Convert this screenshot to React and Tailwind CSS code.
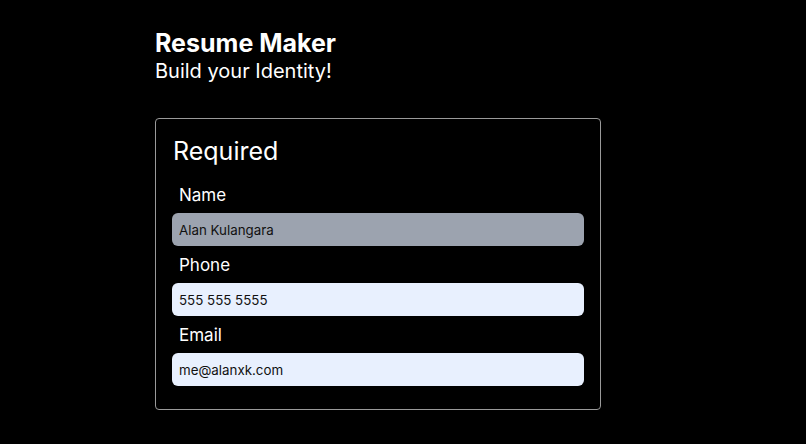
const fields = [
    { label: "Name", value: "Alan Kulangara", bg: "bg-[#9ca3af]" },
    { label: "Phone", value: "555 555 5555", bg: "bg-[#e8f0fe]" },
    { label: "Email", value: "me@alanxk.com", bg: "bg-[#e8f0fe]" },
];

const App = () => {
    return (
        <div className="bg-black min-h-screen w-full text-white font-['Inter',sans-serif] pl-[155px] pt-[29px]">
            <h1 className="text-[25px] font-bold leading-7">Resume Maker</h1>
            <p className="text-xl leading-7">Build your Identity!</p>

            <div className="mt-[33px] w-[446px] border border-[#9a9a9a] rounded-[4px] px-4 pt-[17px] pb-[18px]">
                <h2 className="text-[25px] leading-[30px] pl-px">Required</h2>
                <div className="flex flex-col mt-[15px]">
                    {fields.map((field) => (
                        <div key={field.label} className="flex flex-col mb-[5px]">
                            <label className="pl-[7px] text-[17px] leading-[28px]">{field.label}</label>
                            <input
                                readOnly
                                value={field.value}
                                className={`${field.bg} mt-[4px] h-[33px] w-full rounded-md pl-[7px] text-[13.333px] text-[#111] outline-none`}
                            />
                        </div>
                    ))}
                </div>
            </div>
        </div>
    );
};

export default App;
